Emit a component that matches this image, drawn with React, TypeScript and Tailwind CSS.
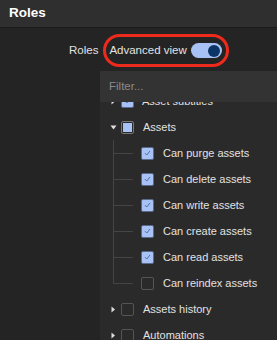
import React from "react";

const font = { fontFamily: '"Liberation Sans", Arial, sans-serif' };

function Check() {
  return (
    <span className="flex h-[13px] w-[13px] shrink-0 items-center justify-center rounded-[2px] border border-[#5a6a8a] bg-[#a9c2f5]">
      <svg width="7" height="6" viewBox="0 0 7 6">
        <path d="M1 3.2 L2.8 5 L6 1" fill="none" stroke="#4c6ea8" strokeWidth="1" />
      </svg>
    </span>
  );
}

function Empty() {
  return <span className="block h-[13px] w-[13px] shrink-0 rounded-[2px] border border-[#555]" />;
}

function Caret({ open }: { open?: boolean }) {
  return open ? (
    <svg width="7" height="7" viewBox="0 0 7 7" className="shrink-0">
      <path d="M0.5 1.5 H6.5 L3.5 5.5 Z" fill="#ddd" />
    </svg>
  ) : (
    <svg width="7" height="7" viewBox="0 0 7 7" className="shrink-0">
      <path d="M1.5 0.5 V6.5 L5 3.5 Z" fill="#ddd" />
    </svg>
  );
}

const children: [string, boolean][] = [
  ["Can purge assets", true],
  ["Can delete assets", true],
  ["Can write assets", true],
  ["Can create assets", true],
  ["Can read assets", true],
  ["Can reindex assets", false],
];

export default function App() {
  return (
    <div className="h-[340px] w-[277px] overflow-hidden bg-[#242424] text-[#e2e2e2]" style={font}>
      <div className="flex h-[28px] items-center border-b border-[#1b1b1b] bg-[#2f2f2f] pl-[9px] text-[13.5px] font-bold text-white">
        Roles
      </div>
      <div className="flex h-[43px] items-center pl-[69px] pt-[2px] text-[11.5px]">
        <span className="mr-[5px]">Roles</span>
        <div className="flex h-[33px] items-center rounded-full border-[3px] border-[#ee2a1c] pl-[3px] pr-[4px]">
          <span className="mr-[4px]">Advanced view</span>
          <span className="flex h-[15px] w-[31px] items-center justify-end rounded-full bg-[#a9c2f5] pr-[2px]">
            <span className="h-[12px] w-[12px] rounded-full bg-[#0b3566]" />
          </span>
        </div>
      </div>
      <div className="ml-[100px] h-[269px] overflow-hidden bg-[#2a2a2a]">
        <div className="flex h-[31px] items-center bg-[#333333] pl-[9px] text-[11.5px] text-[#8a8a8a]">Filter...</div>
        <div className="relative h-[238px] overflow-hidden">
          <div className="absolute left-0 right-0 top-[-8px] flex h-[14px] items-center pl-[10px]">
            <span className="mr-[4px]"><Caret /></span>
            <Check />
            <span className="ml-[8px] text-[11px]">Asset subtitles</span>
          </div>
          <div className="box-content flex h-[26px] items-center pl-[10px] pt-[12px]">
            <span className="mr-[4px]"><Caret open /></span>
            <span className="flex h-[13px] w-[13px] items-center justify-center rounded-[2px] border border-[#777]">
              <span className="block h-[9px] w-[9px] bg-[#a9c2f5]" />
            </span>
            <span className="ml-[9px] text-[11px]">Assets</span>
          </div>
          <div className="relative">
            <div className="absolute left-[13px] top-0 h-[143px] w-px bg-[#444]" />
            {children.map(([label, on]) => (
              <div key={label} className="flex h-[26px] items-center">
                <span className="ml-[13px] mr-[8px] h-px w-[20px] bg-[#444]" />
                {on ? <Check /> : <Empty />}
                <span className="ml-[9px] text-[11px]">{label}</span>
              </div>
            ))}
          </div>
          {["Assets history", "Automations"].map((l) => (
            <div key={l} className="flex h-[26px] items-center pl-[10px]">
              <span className="mr-[4px]"><Caret /></span>
              <Empty />
              <span className="ml-[9px] text-[11px]">{l}</span>
            </div>
          ))}
        </div>
      </div>
    </div>
  );
}
